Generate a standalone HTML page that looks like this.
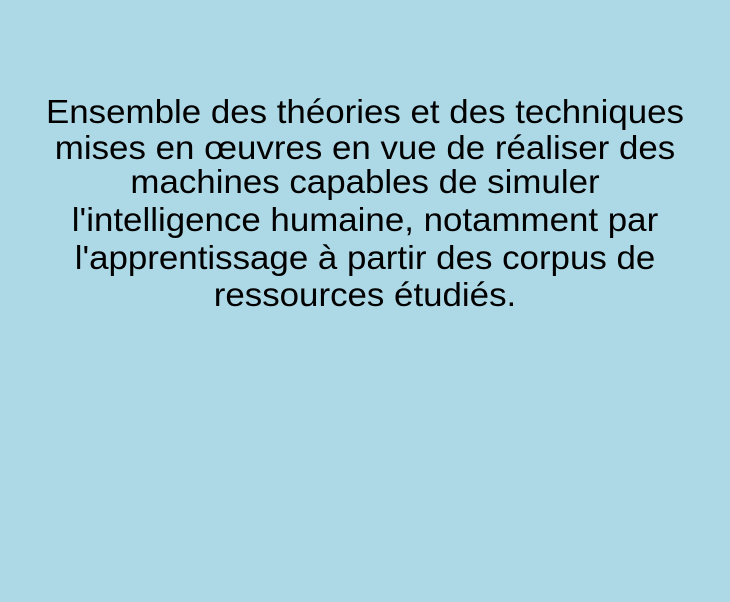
<!DOCTYPE html>
<html><head><meta charset="utf-8"><style>
html,body{margin:0;padding:0;}
body{width:730px;height:602px;background:#add8e6;position:relative;overflow:hidden;font-family:"Liberation Sans",sans-serif;color:#000;}
.l{position:absolute;left:0;width:730px;text-align:center;font-size:33px;line-height:33px;white-space:nowrap;transform:scaleX(1.057);transform-origin:365px 0;}
</style></head><body>
<div class="l" style="top:95px">Ensemble des théories et des techniques</div>
<div class="l" style="top:131px">mises en œuvres en vue de réaliser des</div>
<div class="l" style="top:165px">machines capables de simuler</div>
<div class="l" style="top:203px">l'intelligence humaine, notamment par</div>
<div class="l" style="top:241px">l'apprentissage à partir des corpus de</div>
<div class="l" style="top:278px">ressources étudiés.</div>
</body></html>
